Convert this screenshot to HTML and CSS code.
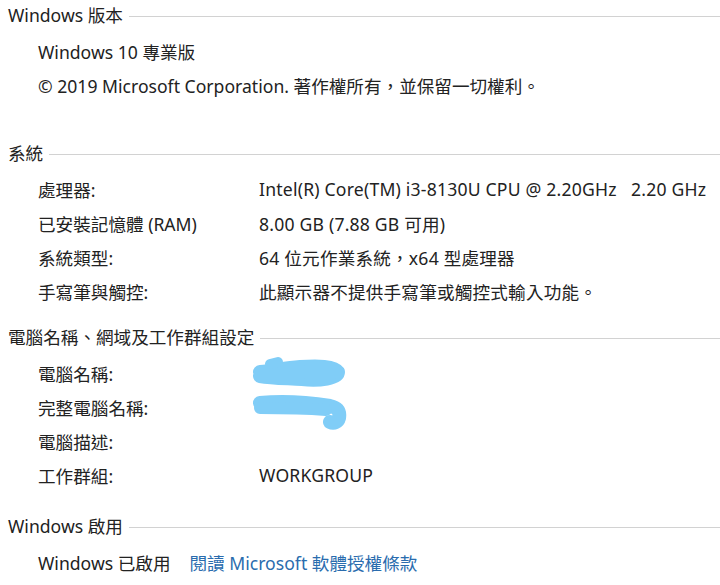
FILE: index.html
```html
<!DOCTYPE html>
<html lang="zh-Hant">
<head>
<meta charset="utf-8">
<link rel="stylesheet" href="styles.css">
</head>
<body>
<div class="page">
  <section class="sec sec-first">
    <div class="head"><span class="title">Windows 版本</span><span class="rule"></span></div>
    <div class="row"><span class="full">Windows 10 專業版</span></div>
    <div class="row"><span class="full">© 2019 Microsoft Corporation. 著作權所有，並保留一切權利。</span></div>
  </section>
  <section class="sec sec-sys">
    <div class="head"><span class="title">系統</span><span class="rule"></span></div>
    <div class="row"><span class="label">處理器:</span><span class="value">Intel(R) Core(TM) i3-8130U CPU @ 2.20GHz&nbsp;&nbsp;&nbsp;2.20 GHz</span></div>
    <div class="row"><span class="label">已安裝記憶體 (RAM)</span><span class="value">8.00 GB (7.88 GB 可用)</span></div>
    <div class="row"><span class="label">系統類型:</span><span class="value">64 位元作業系統，x64 型處理器</span></div>
    <div class="row"><span class="label">手寫筆與觸控:</span><span class="value">此顯示器不提供手寫筆或觸控式輸入功能。</span></div>
  </section>
  <section class="sec sec-name">
    <div class="head"><span class="title">電腦名稱、網域及工作群組設定</span><span class="rule"></span></div>
    <div class="row"><span class="label">電腦名稱:</span><span class="value"></span></div>
    <div class="row"><span class="label">完整電腦名稱:</span><span class="value"></span></div>
    <div class="row"><span class="label">電腦描述:</span><span class="value"></span></div>
    <div class="row"><span class="label">工作群組:</span><span class="value">WORKGROUP</span></div>
    <svg class="scribble" width="110" height="85" viewBox="0 0 110 85">
      <g fill="none" stroke="#80cdf7" stroke-linecap="round" stroke-linejoin="round">
        <path d="M10 20 C24 19 34 16 50 15 C68 14 84 14 88 20 C88 26 70 29 52 27 C36 26 22 26 10 24" stroke-width="14"/>
        <path d="M20 12 L28 10" stroke-width="10"/>
        <path d="M56 20 L84 20" stroke-width="14"/>
        <path d="M10 51 C30 49 55 50 80 54 C89 56 90 60 89 66 C88 70 84 72 80 70" stroke-width="14"/>
        <path d="M10 56 C30 56 50 56 76 58" stroke-width="12"/>
      </g>
    </svg>
  </section>
  <section class="sec sec-act">
    <div class="head"><span class="title">Windows 啟用</span><span class="rule"></span></div>
    <div class="row"><span class="full">Windows 已啟用</span><a class="link" href="#">閱讀 Microsoft 軟體授權條款</a></div>
  </section>
</div>
</body>
</html>
```
FILE: styles.css
```css
html, body {
  margin: 0;
  padding: 0;
  background: #ffffff;
}
body {
  font-family: "Noto Sans", "Noto Sans CJK TC", sans-serif;
  font-size: 17.6px;
  color: #222222;
  width: 720px;
  height: 585px;
  overflow: hidden;
}
.page {
  display: flex;
  flex-direction: column;
}
.sec {
  position: relative;
  display: flex;
  flex-direction: column;
}
.sec-sys { margin-top: 36px; }
.sec-name { margin-top: 14px; }
.sec-act { margin-top: 19px; }
.head {
  height: 30px;
  display: flex;
  align-items: center;
  padding-left: 8px;
  margin-bottom: 4px;
}
.title {
  white-space: nowrap;
  line-height: 30px;
}
.rule {
  flex: 1;
  height: 1px;
  background: #d2d2d2;
  margin-left: 6px;
  margin-top: 3px;
}
.row {
  height: 34px;
  display: flex;
  align-items: center;
  padding-left: 38px;
  white-space: nowrap;
}
.label {
  width: 221px;
  flex: none;
}
.value {
  flex: none;
  letter-spacing: 0.2px;
}
.link {
  color: #2a6cae;
  text-decoration: none;
  margin-left: 19px;
}
.scribble {
  position: absolute;
  left: 250px;
  top: 30px;
}
```
